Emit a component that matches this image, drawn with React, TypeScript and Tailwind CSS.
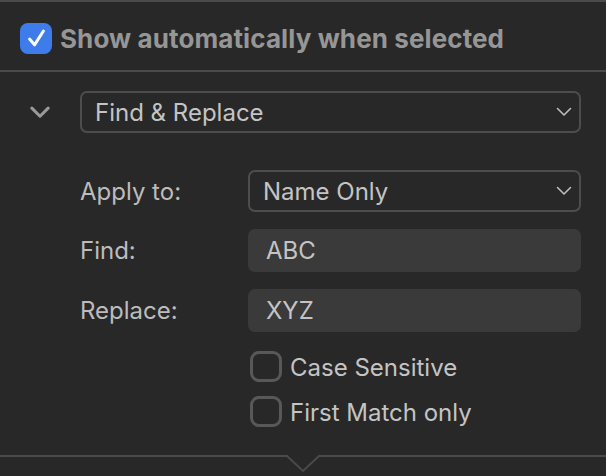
import React from "react";

function Chevron({ className = "", sw = 1.6 }: { className?: string; sw?: number }) {
  return (
    <svg className={className} viewBox="0 0 16 10" fill="none">
      <path d="M1.5 1.5 L8 8 L14.5 1.5" stroke="currentColor" strokeWidth={sw} strokeLinecap="round" strokeLinejoin="round" />
    </svg>
  );
}

function Select({ label }: { label: string }) {
  return (
    <div className="flex h-[42px] items-center justify-between rounded-[7px] border-2 border-[#4d4d4d] pl-[13px] pr-[7px]">
      <span className="pt-[1px] text-[24px] text-[#c4c4c4]">{label}</span>
      <Chevron className="h-[10px] w-[16px] text-[#bdbdbd]" />
    </div>
  );
}

function Field({ value }: { value: string }) {
  return (
    <div className="flex h-[43px] items-center rounded-[7px] bg-[#3a3a3a] pl-[18px]">
      <span className="pt-[1px] text-[24px] text-[#c4c4c4]">{value}</span>
    </div>
  );
}

function Check({ label }: { label: string }) {
  return (
    <div className="flex h-[31px] items-center gap-[8px]">
      <div className="h-[31px] w-[32px] rounded-[9px] border-[3px] border-[#585858]" />
      <span className="pt-[3px] text-[24px] leading-[28px] text-[#c4c4c4]">{label}</span>
    </div>
  );
}

export default function App() {
  return (
    <div
      className="relative flex h-[476px] w-[606px] flex-col overflow-hidden bg-[#282828]"
      style={{ fontFamily: "Inter, 'Noto Sans', sans-serif" }}
    >
      <div className="h-[2px] bg-[#4a4a4a]" />
      <div className="flex h-[68px] items-center gap-[8px] pl-[20px] pt-[5px]">
        <div className="flex h-[31px] w-[32px] items-center justify-center rounded-[8px] bg-[#3d7cea]">
          <svg viewBox="0 0 20 20" className="h-[23px] w-[23px]" fill="none">
            <path d="M4 10.5 L8.3 15.5 L16 3.5" stroke="white" strokeWidth="2.6" strokeLinecap="round" strokeLinejoin="round" />
          </svg>
        </div>
        <span className="text-[26px] font-bold tracking-[0.1px] text-[#969696]">Show automatically when selected</span>
      </div>
      <div className="h-[2px] bg-[#4a4a4a]" />

      <div className="flex items-center pt-[19px] pr-[25px]">
        <div className="flex w-[80px] justify-center">
          <Chevron className="h-[13px] w-[20px] text-[#9a9a9a]" sw={2.4} />
        </div>
        <div className="flex-1">
          <Select label="Find & Replace" />
        </div>
      </div>

      <div className="mt-[37px] grid grid-cols-[168px_1fr] items-center gap-y-[17px] pl-[80px] pr-[25px]">
        <span className="pt-[1px] text-[24px] text-[#bcbcbc]">Apply to:</span>
        <Select label="Name Only" />
        <span className="pt-[1px] text-[24px] text-[#bcbcbc]">Find:</span>
        <Field value="ABC" />
        <span className="pt-[1px] text-[24px] text-[#bcbcbc]">Replace:</span>
        <Field value="XYZ" />
      </div>

      <div className="mt-[19px] flex flex-col gap-[14px] pl-[250px]">
        <Check label="Case Sensitive" />
        <Check label="First Match only" />
      </div>

      <svg className="absolute left-0 top-[454px]" width="606" height="20" viewBox="0 0 606 20">
        <path d="M0 2 H287 L303 17 L319 2 H606" stroke="#4a4a4a" strokeWidth="2" fill="none" />
      </svg>
    </div>
  );
}
